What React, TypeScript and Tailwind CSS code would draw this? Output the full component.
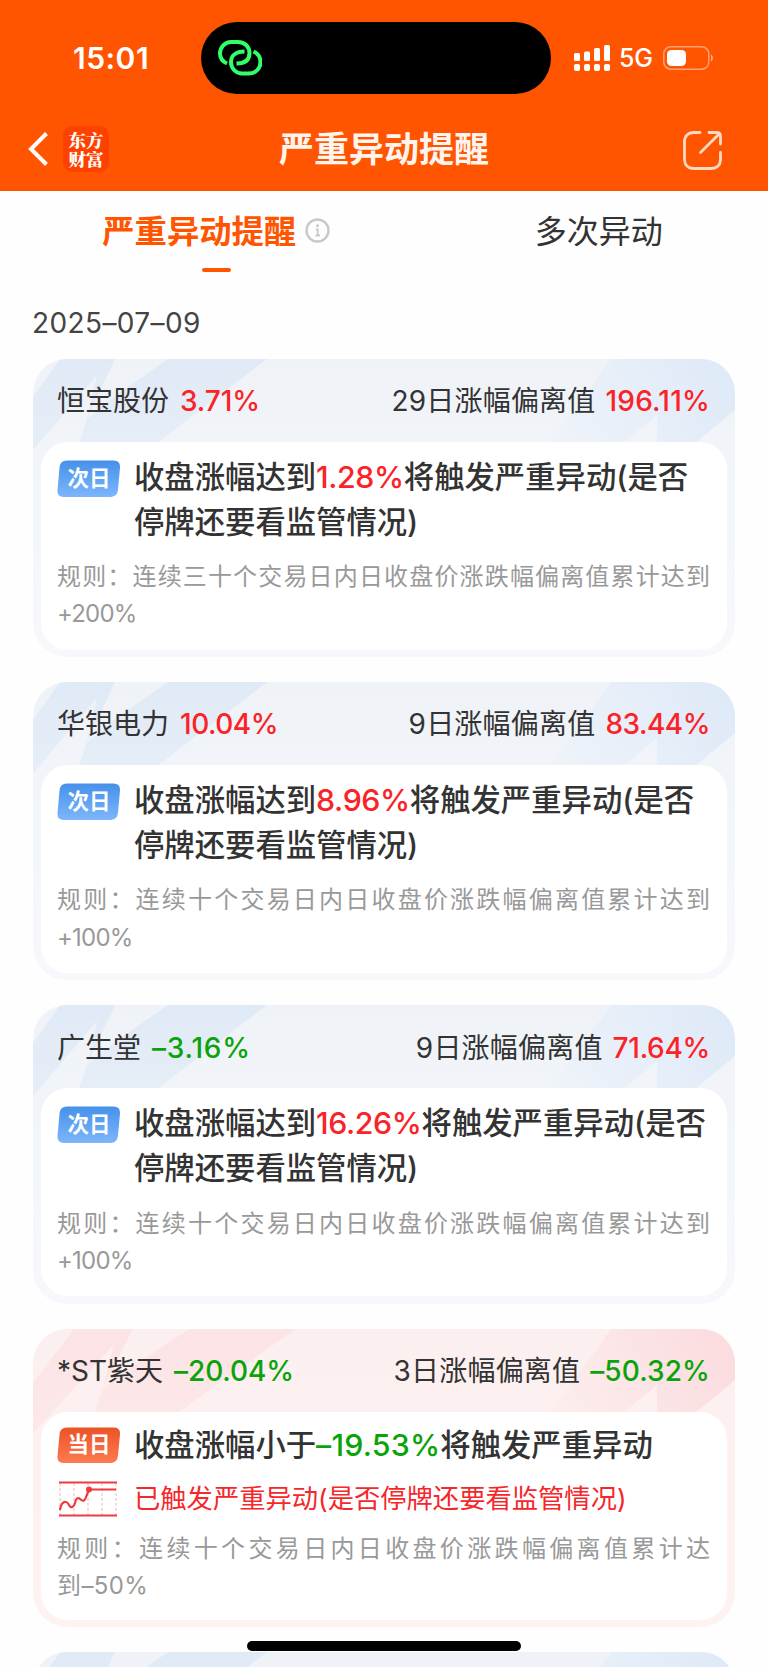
type Dir = "up" | "down";
type Stock = {
  name: string;
  change: string;
  changeClass: string;
  label: string;
  value: string;
  valueClass: string;
  today?: boolean;
  lead: string;
  target: string;
  targetDir: Dir;
  tail: string;
  triggered?: string;
  rule: string;
  limit: string;
};

const tone = { up: "text-[#fa2328]", down: "text-[#0aa30a]" };

const stocks: Stock[] = [
  {
    name: "恒宝股份",
    change: "3.71%",
    changeClass: "text-[#fa2328] tracking-[-0.1px]",
    label: "29日涨幅偏离值",
    value: "196.11%",
    valueClass: "text-[#fa2328] tracking-[0.2px]",
    lead: "收盘涨幅达到",
    target: "1.28%",
    targetDir: "up",
    tail: "将触发严重异动(是否停牌还要看监管情况)",
    rule: "规则：连续三十个交易日内日收盘价涨跌幅偏离值累计达到",
    limit: "+200%",
  },
  {
    name: "华银电力",
    change: "10.04%",
    changeClass: "text-[#fa2328] tracking-[-0.5px]",
    label: "9日涨幅偏离值",
    value: "83.44%",
    valueClass: "text-[#fa2328] tracking-[-0.5px]",
    lead: "收盘涨幅达到",
    target: "8.96%",
    targetDir: "up",
    tail: "将触发严重异动(是否停牌还要看监管情况)",
    rule: "规则：连续十个交易日内日收盘价涨跌幅偏离值累计达到",
    limit: "+100%",
  },
  {
    name: "广生堂",
    change: "–3.16%",
    changeClass: "text-[#0aa30a] tracking-[0.8px]",
    label: "9日涨幅偏离值",
    value: "71.64%",
    valueClass: "text-[#fa2328] tracking-[-0.3px]",
    lead: "收盘涨幅达到",
    target: "16.26%",
    targetDir: "up",
    tail: "将触发严重异动(是否停牌还要看监管情况)",
    rule: "规则：连续十个交易日内日收盘价涨跌幅偏离值累计达到",
    limit: "+100%",
  },
  {
    name: "*ST紫天",
    change: "–20.04%",
    changeClass: "text-[#0aa30a] tracking-[-0.1px]",
    label: "3日涨幅偏离值",
    value: "–50.32%",
    valueClass: "text-[#0aa30a] tracking-[0.1px]",
    today: true,
    lead: "收盘涨幅小于",
    target: "–19.53%",
    targetDir: "down",
    tail: "将触发严重异动",
    triggered: "已触发严重异动(是否停牌还要看监管情况)",
    rule: "规则：连续十个交易日内日收盘价涨跌幅偏离值累计达",
    limit: "到–50%",
  },
];

function StatusBar() {
  return (
    <div className="flex h-[116px] items-center text-white">
      <div className="w-[201px] pl-[73px] text-[30px] font-semibold tracking-[0.5px]">15:01</div>
      <div className="flex h-[72px] w-[350px] items-center rounded-full bg-black pl-[17px]">
        <svg width="44" height="36" viewBox="0 0 44 36" fill="none" stroke="#30ff6a" strokeWidth="4">
          <path d="M9 23.500C4.500 21.500 2 17.500 2 13.500C2 7 7 2 13 2H20C27 2 31.500 7 31.500 13C31.500 19.500 27.500 23.500 18.500 23.500" />
          <path d="M26.500 11.500C17.500 11.500 13 16 13 22C13 28 17.500 33.500 24 33.500H31C38 33.500 42.500 28 42.500 22C42.500 17.500 40 13.500 35.500 11.500" />
        </svg>
      </div>
      <svg className="ml-[23px]" width="37" height="26" viewBox="0 0 37 26" fill="white">
        <rect x="0" y="8" width="6" height="8" rx="1.500" />
        <rect x="10" y="6.500" width="6" height="9.500" rx="1.500" />
        <rect x="20" y="3" width="6" height="13" rx="1.500" />
        <rect x="30" y="0" width="6" height="16" rx="1.500" />
        <rect x="0" y="19" width="6" height="7" rx="2" />
        <rect x="10" y="19" width="6" height="7" rx="2" />
        <rect x="20" y="19" width="6" height="7" rx="2" />
        <rect x="30" y="19" width="6" height="7" rx="2" />
      </svg>
      <span className="mt-[2px] ml-[8px] text-[25px] font-medium tracking-[-0.2px]">5G</span>
      <svg className="ml-[10.500px]" width="51" height="24" viewBox="0 0 51 24" fill="none">
        <rect x="0.800" y="0.800" width="45" height="22.400" rx="7" stroke="white" strokeOpacity="0.450" strokeWidth="1.500" />
        <rect x="4" y="4" width="19" height="16" rx="4.500" fill="white" />
        <path d="M48 8.500C50.500 9.500 50.500 14.500 48 15.500Z" fill="white" fillOpacity="0.500" />
      </svg>
    </div>
  );
}

function NavBar() {
  return (
    <div className="flex h-[66px] items-center justify-between pr-[46px] pl-[28px] text-white">
      <div className="flex w-[120px] items-center pb-[1px]">
        <svg width="21" height="34" viewBox="0 0 21 34" fill="none" stroke="white" strokeWidth="4">
          <path d="M18.500 1.500L3 17L18.500 32.500" />
        </svg>
        <div className="ml-[14px] flex h-[46px] w-[46px] flex-col items-center justify-center rounded-[9px] bg-[#ff4100] font-['Noto_Serif_CJK_SC','Noto_Sans_CJK_SC',sans-serif] text-[17.500px] leading-[19px] font-black">
          <span>东方</span>
          <span>财富</span>
        </div>
      </div>
      <h1 className="pt-[1px] text-[35px] leading-none font-semibold text-[#fff4ee]">严重异动提醒</h1>
      <div className="flex w-[102px] justify-end pt-[3px]">
        <svg width="39" height="39" viewBox="0 0 39 39" fill="none" stroke="#ffd9c4" strokeWidth="2.800" strokeLinecap="round">
          <path d="M17 1.500H11C5 1.500 1.500 5 1.500 11V28C1.500 34 5 37.500 11 37.500H28C34 37.500 37.500 34 37.500 28V21.500" />
          <path d="M26 1.500H33.500Q37.500 1.500 37.500 5.500V13M36.300 2.700L17.500 21.500" />
        </svg>
      </div>
    </div>
  );
}

function Tabs() {
  return (
    <div className="flex h-[98px] justify-around pt-[20px] text-[32px] leading-[42px]">
      <div className="flex flex-col items-center">
        <div className="flex items-center gap-[9px] text-[32.300px] font-semibold text-[#ff5500]">
          <span>严重异动提醒</span>
          <svg className="mb-[3px]" width="25" height="25" viewBox="0 0 25 25" fill="none">
            <circle cx="12.500" cy="12.500" r="11" stroke="#c9c9c9" strokeWidth="2.400" />
            <circle cx="12.500" cy="7.800" r="1.500" fill="#c9c9c9" />
            <path d="M10.800 11.500H12.700V18M10.500 17.500H15" stroke="#c9c9c9" strokeWidth="1.800" />
          </svg>
        </div>
        <div className="mt-[15px] h-[4px] w-[29px] rounded-full bg-[#ff5500]" />
      </div>
      <div className="pr-[3px] text-[#333]">多次异动</div>
    </div>
  );
}

function Stripes({ today }: { today?: boolean }) {
  const id = today ? "r" : "b";
  const deep = today ? "#fbdcdf" : "#dfeaf8";
  const soft = today ? "#fce3e5" : "#e0eaf6";
  return (
    <svg className="absolute top-0 left-0" width="702" height="110" viewBox="0 0 702 110" fill="none">
      <defs>
        <linearGradient id={`${id}-left`} gradientUnits="userSpaceOnUse" x1="0" y1="0" x2="0" y2="100">
          <stop stopColor={soft} />
          <stop offset="1" stopColor={soft} stopOpacity="0.600" />
        </linearGradient>
        <linearGradient id={`${id}-right`} gradientUnits="userSpaceOnUse" x1="690" y1="10" x2="530" y2="85">
          <stop stopColor={deep} />
          <stop offset="1" stopColor={deep} stopOpacity="0.150" />
        </linearGradient>
      </defs>
      <g fill={`url(#${id}-left)`} transform={today ? "translate(12 0) scale(1.070 1)" : undefined}>
        <path d="M27 0H69L64 16L7 83L-12 105V55Z" />
        <path d="M69 0H82L54 60L64 16Z" />
        <path d="M135 0H234L124 84H46L54 60L82 37Z" />
      </g>
      <path
        d="M578 0H702V51L662 84H624V56L590 84H515L545 46Z"
        fill={`url(#${id}-right)`}
      />
    </svg>
  );
}

function Badge({ today }: { today?: boolean }) {
  const id = today ? "badge-today" : "badge-next";
  return (
    <div
      className={`relative flex w-[64px] items-center justify-center ${
        today ? "mt-[4px] h-[36.500px]" : "mt-[5px] h-[37.500px]"
      }`}
    >
      <svg className="absolute inset-0 h-full w-full" viewBox="0 0 64 38" preserveAspectRatio="none">
        <defs>
          <linearGradient id={id} x1="0" y1="0" x2="0" y2="1">
            <stop stopColor={today ? "#eb5328" : "#4591ea"} />
            <stop offset="1" stopColor={today ? "#ff7a50" : "#7db6fb"} />
          </linearGradient>
        </defs>
        <path
          d="M10 0.500H56.500Q63.500 0.500 63 7.500L61 30Q60.300 37.500 53.500 37.500H7Q0 37.500 0.500 30.500L2.500 8Q3 0.500 10 0.500Z"
          fill={`url(#${id})`}
        />
      </svg>
      <span className="relative text-[21.500px] leading-none font-bold text-white">{today ? "当日" : "次日"}</span>
    </div>
  );
}

function TrendIcon() {
  return (
    <svg width="58" height="36" viewBox="0 0 58 36" fill="none" stroke="#ef3a40">
      <path d="M1 2V34M15 2V34M29 2V34M43 2V34M57 2V34" stroke="#f7b5b8" strokeDasharray="3 2" />
      <path d="M0 1.500H58M0 34.500H58" strokeWidth="2.200" />
      <path d="M1 29C2 21 7 18 10 24C12 28 15 26 16 22C17 17 19 16 21 18C24 21 26 20 27 16L30 8.500H57" strokeWidth="2.200" />
      <circle cx="30" cy="8.500" r="3" fill="#ef3a40" stroke="none" />
    </svg>
  );
}

function StockCard({ stock }: { stock: Stock }) {
  const { today } = stock;
  return (
    <section
      className={`relative h-[298.300px] shrink-0 overflow-hidden rounded-[34px] px-[8px] ${
        today ? "bg-linear-to-b from-[#fcefef] to-[#fff3f2]" : "bg-linear-to-b from-[#eff3f8] to-[#f6f8fc]"
      }`}
    >
      <Stripes today={today} />
      <div className="relative flex h-[83px] items-center justify-between pt-[2px] pr-[17px] pl-[16px] text-[28px] text-[#333]">
        <div className="flex gap-[11px]">
          <span>{stock.name}</span>
          <span className={`font-medium ${stock.changeClass}`}>{stock.change}</span>
        </div>
        <div className="flex gap-[10px]">
          <span className="tracking-[0.2px]">{stock.label}</span>
          <span className={`font-medium ${stock.valueClass}`}>{stock.value}</span>
        </div>
      </div>
      <div
        className={`relative h-[208px] rounded-[27px] bg-white px-[16px] ${today ? "pt-[11px]" : "pt-[13px]"}`}
      >
        <div className="flex gap-[13px]">
          <Badge today={today} />
          <p className="w-[577px] text-[30.350px] leading-[45px] font-medium text-[#333]">
            {stock.lead}
            <span className={`${today ? "tracking-[0.2px]" : "tracking-[-0.4px]"} ${tone[stock.targetDir]}`}>
              {stock.target}
            </span>
            {stock.tail}
          </p>
        </div>
        {stock.triggered && (
          <div className="mt-[13px] flex items-center gap-[17px] pl-[2px] text-[26.300px] leading-[36px] text-[#f5272b]">
            <TrendIcon />
            <span>{stock.triggered}</span>
          </div>
        )}
        <p className="mt-[13.500px] w-[653px] text-justify text-[24px] leading-[37.300px] text-[#999]">
          {stock.rule}
          <wbr />
          <span className={`whitespace-nowrap ${today ? "tracking-[0.4px]" : "tracking-[-0.8px]"}`}>
            {stock.limit}
          </span>
        </p>
      </div>
    </section>
  );
}

export default function App() {
  return (
    <div className="relative h-[1667px] w-[768px] overflow-hidden bg-[#fefefe] font-[Inter,'Noto_Sans_CJK_SC',sans-serif]">
      <header className="h-[191px] bg-[#ff5500]">
        <StatusBar />
        <NavBar />
      </header>
      <Tabs />
      <div className="pl-[32px] text-[28px] leading-[68px] tracking-[0.4px] text-[#444]">2025–07–09</div>
      <main className="mt-[1.700px] flex flex-col gap-[25px] px-[33px]">
        {stocks.map((stock) => (
          <StockCard key={stock.name} stock={stock} />
        ))}
        <div className="relative h-[298px] shrink-0 overflow-hidden rounded-[34px] bg-[#eff3f8]">
          <Stripes />
        </div>
      </main>
      <div className="absolute bottom-[16px] left-[247px] h-[10px] w-[274px] rounded-full bg-black" />
    </div>
  );
}
